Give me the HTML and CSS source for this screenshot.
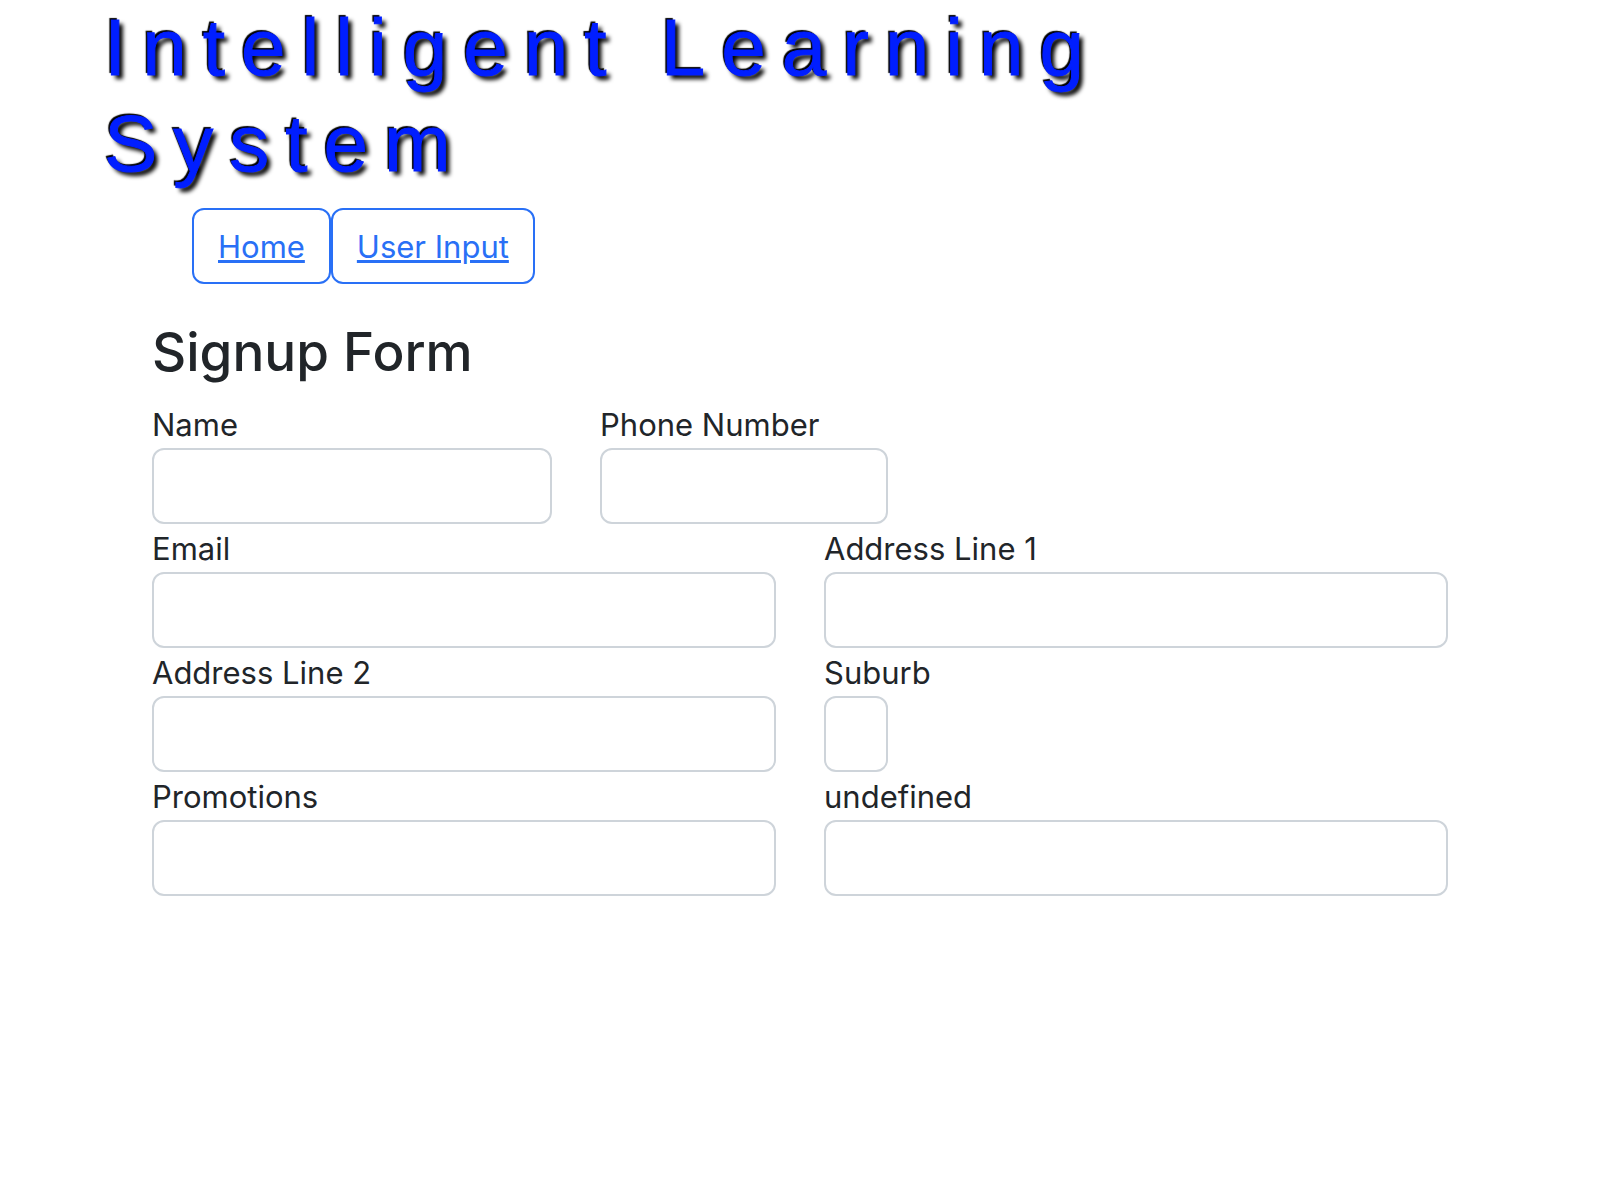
FILE: index.html
```html
<!DOCTYPE html>
<html lang="en">
<head>
<meta charset="utf-8">
<title>Intelligent Learning System</title>
<link rel="stylesheet" href="styles.css">
</head>
<body>
<header class="header">
  <h1 class="brand">Intelligent Learning System</h1>
  <nav class="nav">
    <a class="nav-link" href="#home">Home</a>
    <a class="nav-link" href="#input">User Input</a>
  </nav>
</header>
<main class="main">
  <h2 class="form-title">Signup Form</h2>
  <form class="form">
    <div class="field span-4"><label for="name">Name</label><input id="name" type="text"></div>
    <div class="field span-3"><label for="phone">Phone Number</label><input id="phone" type="tel"></div>
    <div class="field span-6 row-start"><label for="email">Email</label><input id="email" type="email"></div>
    <div class="field span-6"><label for="address1">Address Line 1</label><input id="address1" type="text"></div>
    <div class="field span-6"><label for="address2">Address Line 2</label><input id="address2" type="text"></div>
    <div class="field span-1"><label for="suburb">Suburb</label><input id="suburb" type="text"></div>
    <div class="field span-6 row-start"><label for="promotions">Promotions</label><input id="promotions" type="text"></div>
    <div class="field span-6"><label for="other">undefined</label><input id="other" type="text"></div>
  </form>
</main>
</body>
</html>
```

FILE: styles.css
```css
* {
  box-sizing: border-box;
}

body {
  margin: 0;
  background: #fff;
  color: #212529;
  font-family: Inter, "Liberation Sans", sans-serif;
  font-size: 31px;
  line-height: 46px;
}

.header {
  padding: 0 104px;
}

.brand {
  margin: 0;
  color: #001eff;
  font-family: "Liberation Sans", Arial, sans-serif;
  font-size: 80px;
  font-weight: 400;
  line-height: 96px;
  letter-spacing: 16px;
  -webkit-text-stroke: 1px #001eff;
  text-shadow: -2px -2px 1px #000, 4px 4px 4px #000;
}

.nav {
  display: flex;
  padding: 16px 88px 0;
}

.nav-link {
  padding: 14px 24px 12px;
  border: 2px solid #2970f6;
  border-radius: 12px;
  color: #2970f6;
  text-decoration: underline;
}

.main {
  padding: 32px 152px;
}

.form-title {
  margin: 0 0 12px;
  font-size: 53px;
  font-weight: 500;
  line-height: 72px;
}

.form {
  display: grid;
  grid-template-columns: repeat(12, 1fr);
  column-gap: 48px;
}

.field {
  display: flex;
  flex-direction: column;
  min-width: 0;
}

.field label {
  padding-top: 2px;
  white-space: nowrap;
}

.field input {
  width: 100%;
  height: 76px;
  padding: 12px 24px;
  border: 2px solid #ced4da;
  border-radius: 12px;
  background: #fff;
  color: inherit;
  font: inherit;
}

.span-1 { grid-column-end: span 1; }
.span-3 { grid-column-end: span 3; }
.span-4 { grid-column-end: span 4; }
.span-6 { grid-column-end: span 6; }
.row-start { grid-column-start: 1; }
```
